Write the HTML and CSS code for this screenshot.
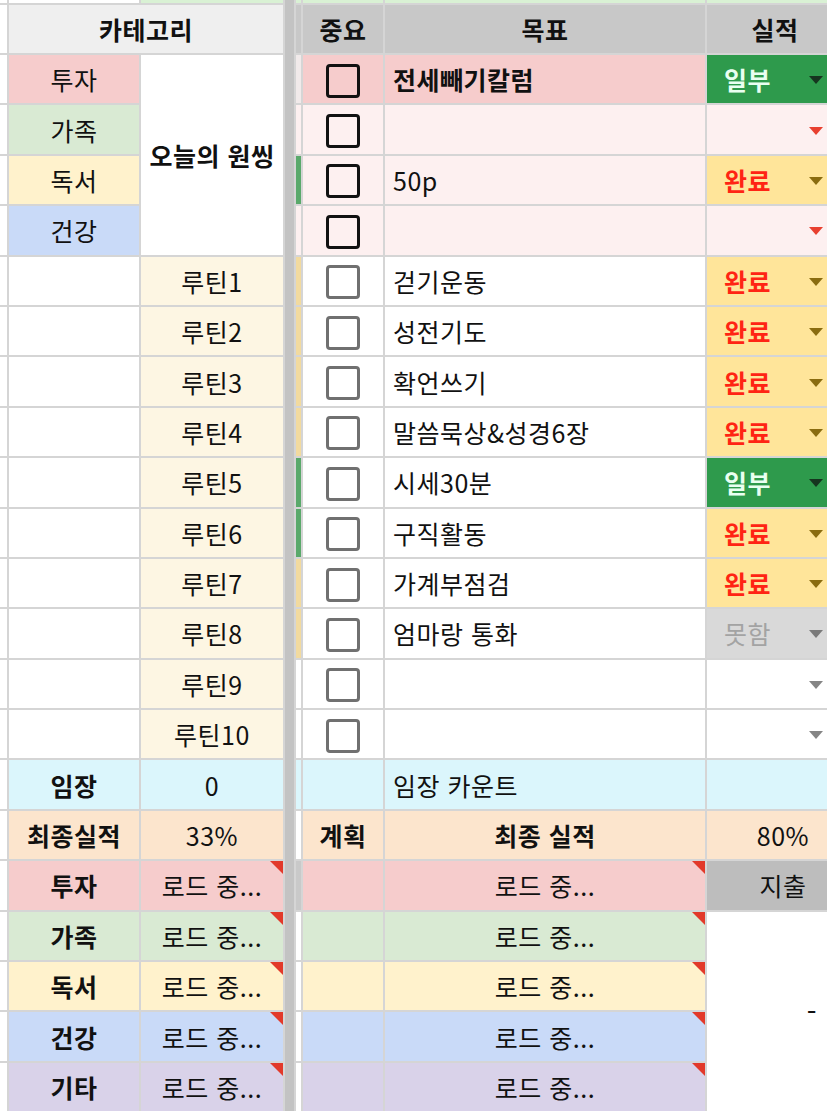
FILE: index.html
```html
<!DOCTYPE html>
<html lang="ko">
<head>
<meta charset="utf-8">
<title>오늘의 원씽</title>
<link rel="stylesheet" href="styles.css">
</head>
<body>
<div class="sheet">
  <!-- row 0 -->
  <div class="c"></div><div class="c"></div><div class="c topg"></div>
  <div class="bar"></div>
  <div class="c topg"></div><div class="c topg"></div><div class="c topg"></div><div class="c topg"></div>

  <!-- header -->
  <div class="c"></div>
  <div class="c hl b span2">카테고리</div>
  <div class="c hg"></div>
  <div class="c hg b">중요</div>
  <div class="c hg b">목표</div>
  <div class="c hg b">실적</div>

  <!-- row 1 -->
  <div class="c"></div>
  <div class="c pink">투자</div>
  <div class="c b rspan4">오늘의 원씽</div>
  <div class="c nl"></div>
  <div class="c pink"><span class="cb dark"></span></div>
  <div class="c pink l b">전세빼기칼럼</div>
  <div class="c st s-part"><span class="v">일부</span><span class="arr"></span></div>

  <!-- row 2 -->
  <div class="c"></div>
  <div class="c green">가족</div>
  <div class="c pinkl"></div>
  <div class="c pinkl"><span class="cb dark"></span></div>
  <div class="c pinkl l"></div>
  <div class="c st pinkl s-red"><span class="v"></span><span class="arr"></span></div>

  <!-- row 3 -->
  <div class="c"></div>
  <div class="c yellow">독서</div>
  <div class="c nbg"></div>
  <div class="c pinkl"><span class="cb dark"></span></div>
  <div class="c pinkl l">50p</div>
  <div class="c st s-done"><span class="v">완료</span><span class="arr"></span></div>

  <!-- row 4 -->
  <div class="c"></div>
  <div class="c blue">건강</div>
  <div class="c pinkl"></div>
  <div class="c pinkl"><span class="cb dark"></span></div>
  <div class="c pinkl l"></div>
  <div class="c st pinkl s-red"><span class="v"></span><span class="arr"></span></div>

  <!-- routines -->
  <div class="c"></div><div class="c"></div>
  <div class="c cream">루틴1</div><div class="c nby"></div>
  <div class="c"><span class="cb"></span></div><div class="c l">걷기운동</div>
  <div class="c st s-done"><span class="v">완료</span><span class="arr"></span></div>

  <div class="c"></div><div class="c"></div>
  <div class="c cream">루틴2</div><div class="c nby"></div>
  <div class="c"><span class="cb"></span></div><div class="c l">성전기도</div>
  <div class="c st s-done"><span class="v">완료</span><span class="arr"></span></div>

  <div class="c"></div><div class="c"></div>
  <div class="c cream">루틴3</div><div class="c nby"></div>
  <div class="c"><span class="cb"></span></div><div class="c l">확언쓰기</div>
  <div class="c st s-done"><span class="v">완료</span><span class="arr"></span></div>

  <div class="c"></div><div class="c"></div>
  <div class="c cream">루틴4</div><div class="c nby"></div>
  <div class="c"><span class="cb"></span></div><div class="c l">말씀묵상&amp;성경6장</div>
  <div class="c st s-done"><span class="v">완료</span><span class="arr"></span></div>

  <div class="c"></div><div class="c"></div>
  <div class="c cream">루틴5</div><div class="c nbg"></div>
  <div class="c"><span class="cb"></span></div><div class="c l">시세30분</div>
  <div class="c st s-part"><span class="v">일부</span><span class="arr"></span></div>

  <div class="c"></div><div class="c"></div>
  <div class="c cream">루틴6</div><div class="c nbg"></div>
  <div class="c"><span class="cb"></span></div><div class="c l">구직활동</div>
  <div class="c st s-done"><span class="v">완료</span><span class="arr"></span></div>

  <div class="c"></div><div class="c"></div>
  <div class="c cream">루틴7</div><div class="c nby"></div>
  <div class="c"><span class="cb"></span></div><div class="c l">가계부점검</div>
  <div class="c st s-done"><span class="v">완료</span><span class="arr"></span></div>

  <div class="c"></div><div class="c"></div>
  <div class="c cream">루틴8</div><div class="c nby"></div>
  <div class="c"><span class="cb"></span></div><div class="c l">엄마랑 통화</div>
  <div class="c st s-no"><span class="v">못함</span><span class="arr"></span></div>

  <div class="c"></div><div class="c"></div>
  <div class="c cream">루틴9</div><div class="c"></div>
  <div class="c"><span class="cb"></span></div><div class="c l"></div>
  <div class="c st s-empty"><span class="v"></span><span class="arr"></span></div>

  <div class="c"></div><div class="c"></div>
  <div class="c cream">루틴10</div><div class="c"></div>
  <div class="c"><span class="cb"></span></div><div class="c l"></div>
  <div class="c st s-empty"><span class="v"></span><span class="arr"></span></div>

  <!-- 임장 -->
  <div class="c"></div>
  <div class="c cyan b">임장</div>
  <div class="c cyan">0</div>
  <div class="c cyan"></div>
  <div class="c cyan"></div>
  <div class="c cyan l">임장 카운트</div>
  <div class="c cyan"></div>

  <!-- 최종실적 -->
  <div class="c"></div>
  <div class="c orange b">최종실적</div>
  <div class="c orange">33%</div>
  <div class="c"></div>
  <div class="c orange b">계획</div>
  <div class="c orange b">최종 실적</div>
  <div class="c orange pr">80%</div>

  <!-- summary rows -->
  <div class="c"></div>
  <div class="c pink b">투자</div>
  <div class="c pink">로드 중...<span class="note"></span></div>
  <div class="c scroll"></div>
  <div class="c pink"></div>
  <div class="c pink">로드 중...<span class="note"></span></div>
  <div class="c spend pr">지출</div>

  <div class="c"></div>
  <div class="c green b">가족</div>
  <div class="c green">로드 중...<span class="note"></span></div>
  <div class="c"></div>
  <div class="c green"></div>
  <div class="c green">로드 중...<span class="note"></span></div>
  <div class="c rspan4 dash">-</div>

  <div class="c"></div>
  <div class="c yellow b">독서</div>
  <div class="c yellow">로드 중...<span class="note"></span></div>
  <div class="c"></div>
  <div class="c yellow"></div>
  <div class="c yellow">로드 중...<span class="note"></span></div>

  <div class="c"></div>
  <div class="c blue b">건강</div>
  <div class="c blue">로드 중...<span class="note"></span></div>
  <div class="c"></div>
  <div class="c blue"></div>
  <div class="c blue">로드 중...<span class="note"></span></div>

  <div class="c"></div>
  <div class="c purple b">기타</div>
  <div class="c purple">로드 중...<span class="note"></span></div>
  <div class="c"></div>
  <div class="c purple"></div>
  <div class="c purple">로드 중...<span class="note"></span></div>
</div>
</body>
</html>
```

FILE: styles.css
```css
html, body {
  margin: 0;
  padding: 0;
  background: #ffffff;
  overflow: hidden;
}

.sheet {
  display: grid;
  grid-template-columns: 7px 130px 142px 9px 5px 80px 320px 136px;
  grid-template-rows: 3px 48px repeat(21, 48.4px);
  gap: 2px;
  width: 843px;
  background: #d5d5d5;
  font-family: "Noto Sans CJK KR", "Noto Sans", sans-serif;
  font-size: 25px;
  letter-spacing: 0.5px;
  color: #111111;
}

.c {
  background: #ffffff;
  display: flex;
  align-items: center;
  justify-content: center;
  position: relative;
  overflow: hidden;
  white-space: nowrap;
  min-width: 0;
}

.bar {
  grid-column: 4;
  grid-row: 1 / -1;
  background: #c3c3c3;
}

.span2 { grid-column: span 2; }
.rspan4 { grid-row: span 4; }

.l { justify-content: flex-start; padding-left: 8px; }
.b { font-weight: 700; }
.pr { padding-left: 16px; }

.topg { background: #d9f1d4; }
.hl { background: #efefef; }
.hg { background: #c8c8c8; }

.pink { background: #f6cccc; }
.pinkl { background: #fdf0f0; }
.green { background: #d9ead3; }
.yellow { background: #fff2cc; }
.blue { background: #c9daf8; }
.purple { background: #d9d2e9; }
.cream { background: #fdf6e3; }
.cyan { background: #dbf6fc; }
.orange { background: #fce5cd; }
.spend { background: #bdbdbd; font-weight: 400; }
.scroll { background: #c9c9c9; }

.nl { background: #f1eaea; }
.nbg { background: #5aa96b; }
.nby { background: #f2da9f; }

/* checkboxes */
.cb {
  display: block;
  width: 28px;
  height: 28px;
  border: 3px solid #707070;
  border-radius: 4px;
  margin-top: 3px;
  background: transparent;
}
.cb.dark { border-color: #111111; }

/* status dropdown cells */
.st {
  justify-content: flex-start;
  padding-left: 17px;
  padding-right: 20px;
  font-weight: 700;
}
.st .v { flex: 1; }
.arr {
  width: 0;
  height: 0;
  border-left: 7px solid transparent;
  border-right: 7px solid transparent;
  border-top: 8px solid #808080;
  margin-top: 2px;
}
.s-part { background: #2e9a4c; color: #e9fff1; }
.s-part .arr { border-top-color: #16351f; }
.s-done { background: #ffe59a; color: #ff2414; }
.s-done .arr { border-top-color: #8a6c10; }
.s-no { background: #d9d9d9; color: #a3a3a3; font-weight: 400; }
.s-no .arr { border-top-color: #7a7a7a; }
.s-red .arr { border-top-color: #e8402f; }
.s-empty .arr { border-top-color: #858585; }

/* comment indicator */
.note {
  position: absolute;
  top: 0;
  right: 0;
  width: 0;
  height: 0;
  border-left: 13px solid transparent;
  border-top: 13px solid #e2392a;
}

.dash {
  justify-content: flex-end;
  padding-right: 26px;
  font-weight: 400;
  font-size: 28px;
}
```
